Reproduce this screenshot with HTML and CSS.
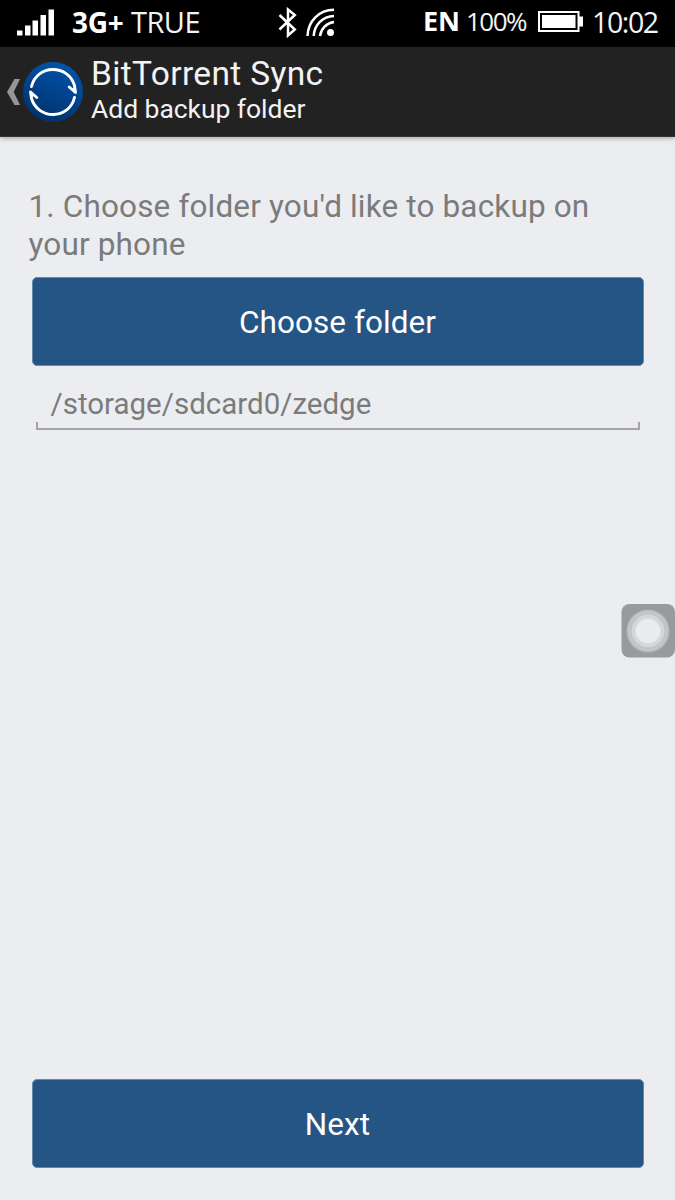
FILE: index.html
```html
<!DOCTYPE html>
<html lang="en">
<head>
<meta charset="utf-8">
<title>BitTorrent Sync</title>
<link rel="stylesheet" href="styles.css">
</head>
<body>
<div class="screen">
  <div class="status">
    <svg class="signal" width="38" height="27" viewBox="0 0 38 27" fill="#fff">
      <path d="M0 21.500h5.500v5H0zM8 16.500h5.500v10H8zM15.500 11.500h5.500v15h-5.500zM23.500 6H29v20.500h-5.500zM31.500 .500H37v26h-5.500z"/>
    </svg>
    <span class="network">3G+</span>
    <span class="carrier">TRUE</span>
    <svg class="bluetooth" width="20" height="32" viewBox="0 0 20 32" fill="none" stroke="#fff" stroke-width="2.500">
      <path d="M1.500 8L16.800 22.500 10 28.500V2.500L16.800 8 1.500 22.500"/>
    </svg>
    <svg class="wifi" width="29" height="29" viewBox="0 0 29 29" fill="none" stroke="#fff" stroke-width="2.500">
      <path d="M1.500 28C2 13 13 2 28 1.800M7.700 28C8.500 16.500 16.500 8.500 28 8M14 28C15 20.500 20.500 15 28 14"/>
      <circle cx="24.500" cy="24.500" r="3.500" fill="#fff" stroke="none"/>
    </svg>
    <span class="lang">EN</span>
    <span class="percent">100%</span>
    <svg class="battery" width="45" height="21" viewBox="0 0 45 21">
      <path d="M1 1h39.500v19H1z" fill="none" stroke="#fff" stroke-width="2"/>
      <path d="M4 4h33.500v13H4zM41 5.500h4v10h-4z" fill="#fff"/>
    </svg>
    <span class="clock">10:02</span>
  </div>
  <header class="bar">
    <svg class="back" width="14" height="28" viewBox="0 0 14 28" fill="#969696">
      <path d="M7.500 1H13L6.700 14 13 27H7.500L0 14z"/>
    </svg>
    <svg class="logo" width="60" height="60" viewBox="0 0 60 60">
      <defs><linearGradient id="disc" x1=".7" y1="0" x2=".3" y2="1"><stop offset="0" stop-color="#0254ad"/><stop offset="1" stop-color="#01316a"/></linearGradient></defs>
      <circle cx="30" cy="30" r="30" fill="url(#disc)"/>
      <g fill="none" stroke="#fff" stroke-width="2.900" stroke-linecap="round" stroke-linejoin="round">
        <path d="M8.500 24.500C14 2 45 2 51.500 23.500L52.500 30.500 46.200 25"/>
        <path d="M51.500 35.500C46 58 15 58 8.500 36.500L7.500 30 13.800 35.500"/>
      </g>
      <path d="M49.500 26.500L53 30.500 52 24zM10.500 34L7 29.500 8 36z" fill="#fff"/>
    </svg>
    <div class="titles">
      <div class="title">BitTorrent Sync</div>
      <div class="subtitle">Add backup folder</div>
    </div>
  </header>
  <main class="content">
    <p class="prompt">1. Choose folder you'd like to backup on your phone</p>
    <button class="button">Choose folder</button>
    <div class="field"><span class="path">/storage/sdcard0/zedge</span></div>
    <button class="button next">Next</button>
  </main>
  <div class="assist">
    <svg width="54" height="54" viewBox="0 0 54 54">
      <rect x=".5" width="53.500" height="53.500" rx="8" fill="#999a9b"/>
      <circle cx="27" cy="27" r="21.500" fill="#b8b9ba"/>
      <circle cx="27" cy="27" r="20" fill="#c5c6c7"/>
      <circle cx="27" cy="27" r="17" fill="#d5d6d7" stroke="#bdbebf"/>
      <circle cx="27" cy="27" r="12.500" fill="#ebecee" stroke="#e0e1e2"/>
    </svg>
  </div>
</div>
</body>
</html>
```
FILE: styles.css
```css
* { box-sizing: border-box; }
body { margin: 0; background: #ecedf1; font-family: Roboto, sans-serif; }
.screen { position: relative; width: 675px; height: 1200px; display: flex; flex-direction: column; overflow: hidden; }
.status { height: 47px; flex: none; background: #000; color: #fff; display: flex; align-items: center; padding-left: 17px; font-family: "Open Sans", "Noto Sans", sans-serif; white-space: nowrap; }
.status svg, .status span { flex: none; }
.status span { line-height: 34px; }
.signal { margin-top: -2px; }
.network { width: 59px; margin-left: 17px; font-size: 28px; font-weight: 700; letter-spacing: -0.3px; margin-top: -4px; }
.carrier { width: 70px; font-size: 29px; letter-spacing: -0.5px; margin-top: -4px; color: #f4f4f4; }
.bluetooth { margin: -2px 0 0 77px; }
.wifi { margin: -3px 0 0 8px; }
.lang { width: 43px; margin: -6px 0 0 88px; font-size: 27px; font-weight: 700; }
.percent { width: 72px; margin-top: -6px; font-size: 26px; letter-spacing: -1.5px; color: #f4f4f4; }
.battery { margin-top: -4px; }
.clock { margin: -4px 0 0 9px; font-size: 28.500px; letter-spacing: -1.4px; color: #f4f4f4; }
.bar { height: 90px; flex: none; display: flex; align-items: center; padding-left: 7px; background: #222; color: #f3f3f3; border-bottom: 1px solid #353333; box-shadow: 0 1px 5px rgba(0, 0, 0, .35); }
.logo { margin-left: 2px; }
.titles { margin: -4px 0 0 8px; white-space: nowrap; }
.title { font-size: 33.500px; line-height: 38px; letter-spacing: 0.35px; }
.subtitle { font-size: 26.500px; line-height: 32px; letter-spacing: -0.05px; }
.content { flex: 1; display: flex; flex-direction: column; padding: 51px 31.500px 32px; }
.prompt { margin: 0 0 14px -3px; color: #7b7b7b; font-size: 31.500px; line-height: 37.500px; letter-spacing: 0.15px; }
.button { height: 89px; width: 612px; flex: none; padding: 2px 0 0 0; border: 1px solid #6389ad; border-radius: 5px; background: #255585; color: #fff; font-family: Roboto, sans-serif; font-size: 31.500px; letter-spacing: 0.05px; }
.field { width: 604px; height: 64px; margin-left: 4px; padding: 18.500px 15px 0; color: #7b7b7b; font-size: 29.500px; line-height: 38px; letter-spacing: 0; background: linear-gradient(#a5a5a7, #a5a5a7) left bottom / 100% 2px no-repeat, linear-gradient(#a5a5a7, #a5a5a7) left bottom / 2px 8px no-repeat, linear-gradient(#a5a5a7, #a5a5a7) right bottom / 2px 8px no-repeat; }
.next { margin-top: auto; }
.assist { position: absolute; left: 621px; top: 604px; width: 54px; height: 54px; }
.assist svg { display: block; }
```
